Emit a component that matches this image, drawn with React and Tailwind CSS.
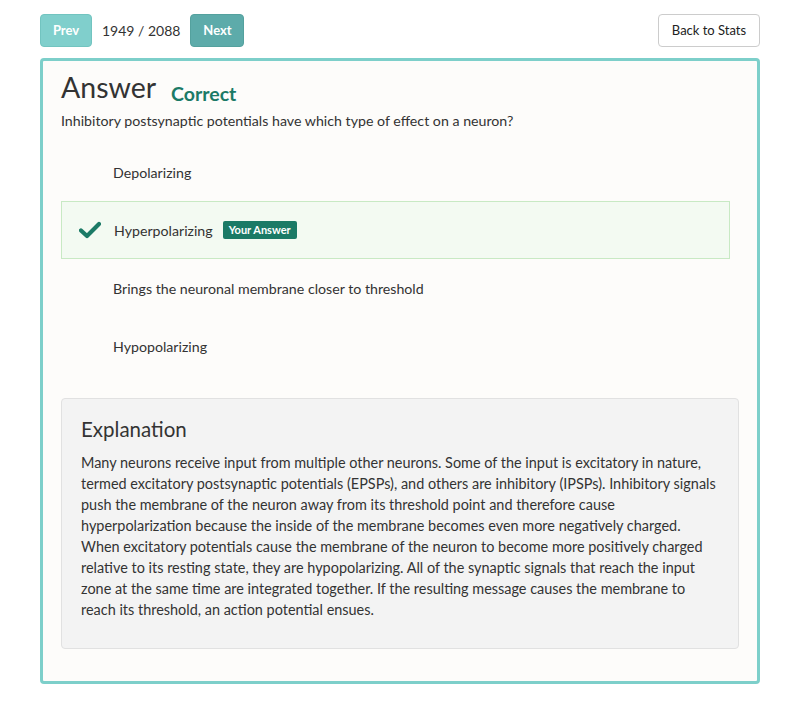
export default function App() {
  const options = [
    { id: 1, text: "Depolarizing" },
    { id: 2, text: "Hyperpolarizing", correct: true, mine: true },
    { id: 3, text: "Brings the neuronal membrane closer to threshold" },
    { id: 4, text: "Hypopolarizing" },
  ];

  return (
    <div
      className="min-h-[706px] bg-white px-[40px] pt-[14px] text-[#333]"
      style={{ fontFamily: "Lato, 'Open Sans', sans-serif" }}
    >
      {/* Barra superior */}
      <div className="flex items-center justify-between h-[33px]">
        <div className="flex items-center">
          <button className="h-[33px] w-[52px] rounded-[4px] border border-[#72c4c0] bg-[#80cfcc] text-[13px] font-bold text-white">
            Prev
          </button>
          <span className="ml-[10px] mr-[10px] text-[14px] text-[#333]">1949 / 2088</span>
          <button className="h-[33px] w-[54px] rounded-[4px] border border-[#54a19e] bg-[#5dabaa] text-[13px] font-bold text-white">
            Next
          </button>
        </div>
        <button className="h-[33px] w-[102px] rounded-[4px] border border-[#ccc] bg-white text-[13px] text-[#222]">
          Back to Stats
        </button>
      </div>

      {/* Tarjeta */}
      <div className="mt-[11px] rounded-[4px] border-[3px] border-[#7dcfca] bg-[#fdfcfa] px-[18px] pt-[8px] pb-[32px]">
        <div className="flex items-baseline">
          <h1 className="text-[28.5px] leading-[36px] text-[#333]">Answer</h1>
          <span className="ml-[15px] text-[19.5px] font-bold text-[#1b7a66] relative top-[3px]">Correct</span>
        </div>
        <p className="mt-[6px] text-[14.2px] leading-[20px]">
          Inhibitory postsynaptic potentials have which type of effect on a neuron?
        </p>

        <div className="mt-[12px] mr-[9px]">
          {options.map((o) =>
            o.correct ? (
              <div
                key={o.id}
                className="flex h-[58px] items-center border border-[#c8e9c4] bg-[#f3faf2] pl-[17px]"
              >
                <svg width="22" height="18" viewBox="0 0 22 18" className="mr-[13px]">
                  <path d="M2 9.5 L8 15 L20 3" fill="none" stroke="#1b7a66" strokeWidth="4.2" strokeLinecap="round" strokeLinejoin="round" />
                </svg>
                <span className="text-[14.2px]">{o.text}</span>
                {o.mine && (
                  <span className="ml-[10px] rounded-[2px] bg-[#1b7a66] px-[6px] py-[2px] text-[11px] font-bold leading-[14px] text-white">
                    Your Answer
                  </span>
                )}
              </div>
            ) : (
              <div key={o.id} className="flex h-[58px] items-center border border-transparent pl-[51px] text-[14.2px]">
                {o.text}
              </div>
            )
          )}
        </div>

        <div className="mt-[23px] rounded-[4px] border border-[#e1e1e1] bg-[#f3f3f3] px-[19px] pt-[16px] pb-[28px]">
          <h2 className="text-[20.5px] leading-[28px] text-[#333]">Explanation</h2>
          <p className="mt-[9px] text-[14.45px] leading-[21px]">
            Many neurons receive input from multiple other neurons. Some of the input is excitatory in nature, termed
            excitatory postsynaptic potentials (EPSPs), and others are inhibitory (IPSPs). Inhibitory signals push the
            membrane of the neuron away from its threshold point and therefore cause hyperpolarization because the
            inside of the membrane becomes even more negatively charged. When excitatory potentials cause the membrane
            of the neuron to become more positively charged relative to its resting state, they are hypopolarizing. All
            of the synaptic signals that reach the input zone at the same time are integrated together. If the resulting
            message causes the membrane to reach its threshold, an action potential ensues.
          </p>
        </div>
      </div>
    </div>
  );
}
